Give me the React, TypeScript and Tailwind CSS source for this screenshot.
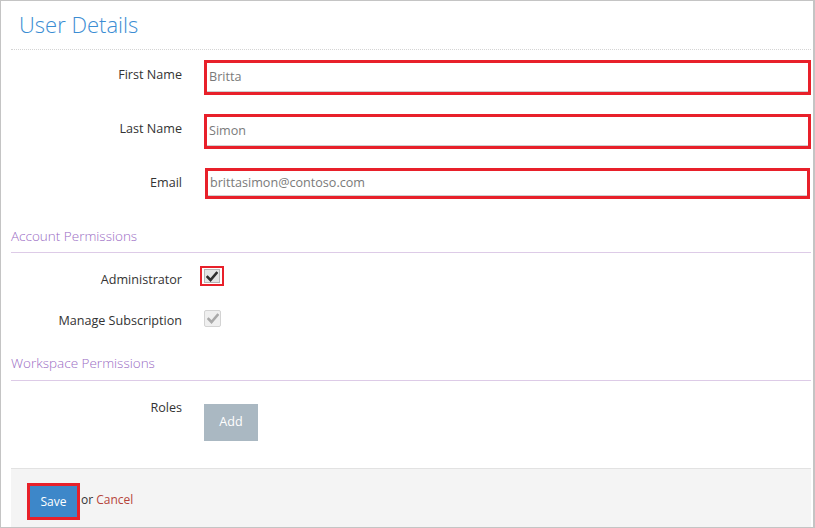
import React from 'react';

const Check: React.FC<{ color: string }> = ({ color }) => (
  <svg width="12" height="11" viewBox="0 0 12 11">
    <path d="M1.5 6 L4.5 9 L10.5 2" fill="none" stroke={color} strokeWidth="2.6" strokeLinecap="square" />
  </svg>
);

const TextRow: React.FC<{ label: string; value: string; last?: boolean }> = ({ label, value, last }) => (
  <div className="flex items-start">
    <div className="w-[171px] text-right pt-[5px] leading-[20px]">{label}</div>
    <div className={last ? 'ml-[23px] mr-[1px] flex-1 border-[3px] border-[#e8202a] h-[31px]' : 'ml-[22px] flex-1 border-[3px] border-[#e8202a] h-[35px]'}>
      <div className="h-full border-b border-[#cfcfcf] pl-[2px] flex items-center text-[#7a7a7a]">{value}</div>
    </div>
  </div>
);

const SectionHeading: React.FC<{ title: string; className: string }> = ({ title, className }) => (
  <div className={`border-b border-[#ddcbe7] text-[13.5px] leading-[20px] font-light text-[#9a6cc4] ${className}`}>{title}</div>
);

export default function App() {
  return (
    <div className="w-[815px] h-[528px] border-l border-t border-b border-r-2 border-[#c4c4c4] bg-white font-['Open_Sans',sans-serif] text-[12.6px] text-[#333] flex flex-col">
      <div className="pl-[10px] pr-[2px] flex flex-col">
        <div className="h-[49px] border-b border-dotted border-[#d4d4d4] pl-[8px] pt-[8px]">
          <h1 className="text-[22px] leading-[30px] font-light text-[#3b8dd3]">User Details</h1>
        </div>

        <div className="mt-[10px] flex flex-col gap-[19px]">
          <TextRow label="First Name" value="Britta" />
          <TextRow label="Last Name" value="Simon" />
          <TextRow label="Email" value="brittasimon@contoso.com" last />
        </div>

        <SectionHeading title="Account Permissions" className="mt-[27px] pb-[6px]" />

        <div className="mt-[13px] flex items-start">
          <div className="w-[171px] text-right pt-[4px] leading-[20px]">Administrator</div>
          <div className="ml-[18px] w-[24px] h-[20px] border-2 border-[#e8202a] flex items-center justify-center">
            <div className="w-[16px] h-[14px] bg-[#e4e4e4] border border-[#b5b5b5] flex items-center justify-center">
              <Check color="#2f2f2f" />
            </div>
          </div>
        </div>

        <div className="mt-[21px] flex items-start">
          <div className="w-[171px] text-right leading-[20px]">Manage Subscription</div>
          <div className="ml-[22px] mt-[-1px] w-[17px] h-[17px] bg-[#efefef] border border-[#d3d3d3] rounded-[2px] flex items-center justify-center">
            <Check color="#a9a9a9" />
          </div>
        </div>

        <SectionHeading title="Workspace Permissions" className="mt-[22px] pb-[7px]" />

        <div className="mt-[17px] flex items-start">
          <div className="w-[171px] text-right leading-[20px]">Roles</div>
          <div className="ml-[22px] mt-[6px] w-[54px] h-[37px] bg-[#aab8c2] text-white flex items-center justify-center">Add</div>
        </div>
      </div>

      <div className="mt-auto ml-[10px] mr-[2px] h-[59px] border-t border-[#e2e2e2] bg-[#f4f4f4] flex items-start text-[12px]">
        <div className="ml-[16px] mt-[14px] border-[3px] border-[#e8202a]">
          <div className="w-[47px] h-[31px] bg-[#3d87c9] text-white flex items-center justify-center">Save</div>
        </div>
        <div className="mt-[21px] ml-[1px] leading-[20px]">
          <span className="text-[#333]">or </span>
          <span className="text-[#b6443a]">Cancel</span>
        </div>
      </div>
    </div>
  );
}
